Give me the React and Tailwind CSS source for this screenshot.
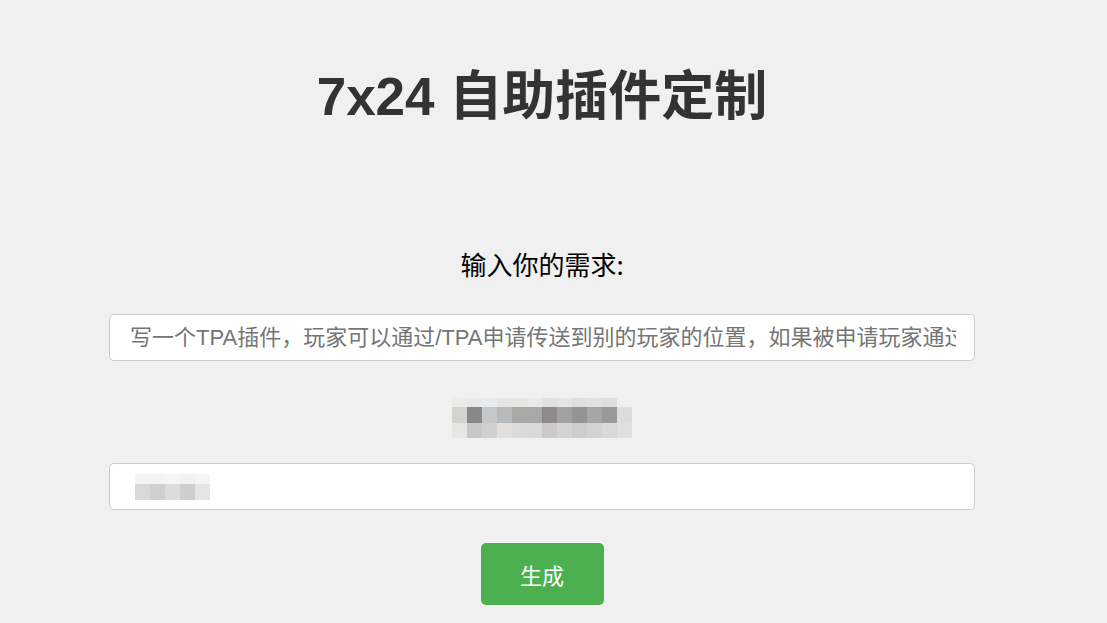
import React from "react";

const row1 = ["#e8e8e6","#e4e4e4","#e6e7e8","#e0e0df","#e2e2e0","#e4e5e6","#dadbdb","#e0e0e0","#d8d8d8","#dcdcdc","#d6d6d6","#f0f0f0"];
const row2 = ["#d4d2cf","#888888","#c6c7c8","#b8b9ba","#a9aaa8","#a8a9a7","#8f8a89","#a2a1a0","#929392","#a6a6a6","#9a9a9a","#dcdcdc"];
const row3 = ["#e6e6e4","#c6c7c6","#d0d0d0","#e0dfdd","#dadcdc","#d8dad9","#cbc9ca","#d4d2d3","#ccccca","#d2d2d2","#d8d8d6","#e0e0e0"];

const in1 = ["#f4f4f4","#f2f3f3","#f5f5f5","#f2f2f0","#f5f5f5"];
const in2 = ["#d8d8d6","#d0d0d0","#dcdcdc","#cfcecc","#e4e4e4"];

export default function App() {
  return (
    <div className="w-[1107px] h-[623px] bg-[#f0f0f0] overflow-hidden">
      <div className="ml-[109px] w-[866px] flex flex-col items-center">
        <h1 className="mt-[65px] h-[64px] leading-[64px] text-[53px] font-bold text-[#333333] whitespace-nowrap [font-family:'Liberation_Sans','Noto_Sans_CJK_SC',sans-serif]">
          7x24 自助插件定制
        </h1>
        <div className="mt-[119px] h-[32px] leading-[32px] text-[26px] text-black whitespace-nowrap [font-family:'Noto_Sans_CJK_SC',sans-serif]">
          输入你的需求:
        </div>
        <div className="mt-[34px] w-[866px] h-[47px] bg-white border border-[#cccccc] rounded-[5px] flex items-center pl-[20px] pr-[18px] overflow-hidden">
          <span className="block w-full text-[22px] text-[#757575] whitespace-nowrap overflow-hidden [font-family:'Liberation_Sans','Noto_Sans_CJK_SC',sans-serif]">
            写一个TPA插件，玩家可以通过/TPA申请传送到别的玩家的位置，如果被申请玩家通过申请则传送
          </span>
        </div>
        <div className="mt-[37px] h-[40px] flex flex-col blur-[0.6px]">
          <div className="flex h-[9px] opacity-70">
            {row1.map((c, i) => (
              <div key={i} className="w-[15px] h-full" style={{ backgroundColor: c }} />
            ))}
          </div>
          <div className="flex h-[16px]">
            {row2.map((c, i) => (
              <div key={i} className="w-[15px] h-full" style={{ backgroundColor: c }} />
            ))}
          </div>
          <div className="flex h-[15px]">
            {row3.map((c, i) => (
              <div key={i} className="w-[15px] h-full" style={{ backgroundColor: c }} />
            ))}
          </div>
        </div>
        <div className="mt-[25px] w-[866px] h-[47px] bg-white border border-[#cccccc] rounded-[5px] flex items-center pl-[25px]">
          <div className="flex flex-col">
            <div className="flex h-[10px]">
              {in1.map((c, i) => (
                <div key={i} className="w-[15px] h-full" style={{ backgroundColor: c }} />
              ))}
            </div>
            <div className="flex h-[16px]">
              {in2.map((c, i) => (
                <div key={i} className="w-[15px] h-full" style={{ backgroundColor: c }} />
              ))}
            </div>
          </div>
        </div>
        <button className="mt-[33px] w-[123px] h-[62px] bg-[#4caf50] rounded-[5px] text-white text-[22px] [font-family:'Noto_Sans_CJK_SC',sans-serif]">
          生成
        </button>
      </div>
    </div>
  );
}
